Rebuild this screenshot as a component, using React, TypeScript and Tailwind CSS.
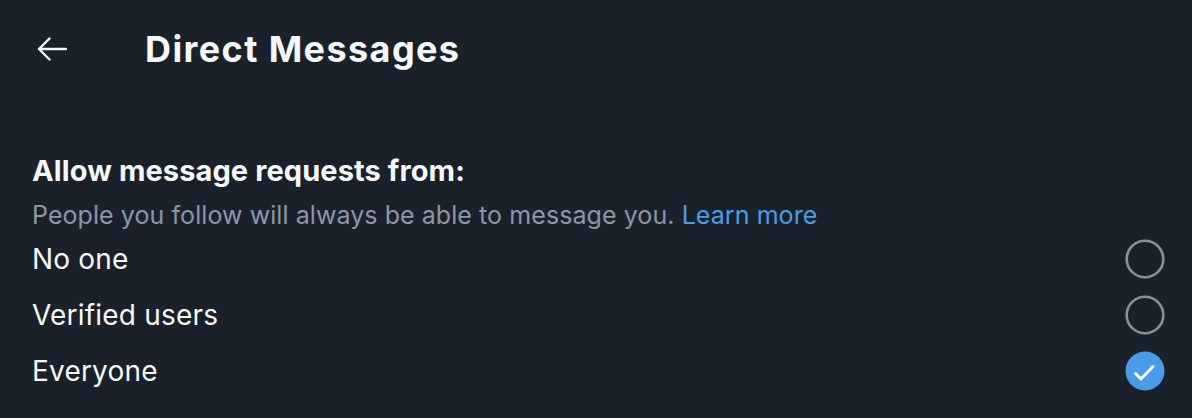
import React from "react";

const font = { fontFamily: "Inter, 'Noto Sans', sans-serif" };

function Radio({ checked }: { checked?: boolean }) {
  if (checked) {
    return (
      <svg width="40" height="40" viewBox="0 0 40 40">
        <circle cx="20" cy="20" r="19.5" fill="#4b9ce8" />
        <path d="M10.5 22.5 L16 28 L28 15.5" fill="none" stroke="#ffffff" strokeWidth="3" strokeLinecap="round" strokeLinejoin="round" />
      </svg>
    );
  }
  return (
    <svg width="40" height="40" viewBox="0 0 40 40">
      <circle cx="20" cy="20" r="18.3" fill="none" stroke="#8a9199" strokeWidth="2.6" />
    </svg>
  );
}

export default function App() {
  const options = [
    { label: "No one", checked: false },
    { label: "Verified users", checked: false },
    { label: "Everyone", checked: true },
  ];
  return (
    <div className="w-[1192px] h-[418px] bg-[#1b212b] text-[#f5f8fa] overflow-hidden" style={font}>
      <div className="flex items-center h-[98px]">
        <div className="w-[145px] flex items-center pl-[37px]">
          <svg width="30" height="24" viewBox="0 0 30 24">
            <path d="M2 12 H29 M12.5 1.5 L2 12 L12.5 22.5" fill="none" stroke="#f5f8fa" strokeWidth="2.4" strokeLinecap="round" strokeLinejoin="round" />
          </svg>
        </div>
        <div className="text-[36px] leading-[40px] font-bold tracking-[1.4px]">Direct Messages</div>
      </div>
      <div className="pl-[32px] pr-[27px] pt-[55px]">
        <div className="text-[29px] leading-[36px] font-bold tracking-[0.1px]">Allow message requests from:</div>
        <div className="mt-[10px] text-[25px] leading-[32px] tracking-[0.07px] text-[#8b97a4]">
          People you follow will always be able to message you.{" "}
          <span className="text-[#4b9ce8]">Learn more</span>
        </div>
        <div className="flex flex-col">
          {options.map((o) => (
            <div key={o.label} className="h-[56px] flex items-center justify-between">
              <span className="text-[28px] leading-[36px] tracking-[0.2px]">{o.label}</span>
              <Radio checked={o.checked} />
            </div>
          ))}
        </div>
      </div>
    </div>
  );
}
